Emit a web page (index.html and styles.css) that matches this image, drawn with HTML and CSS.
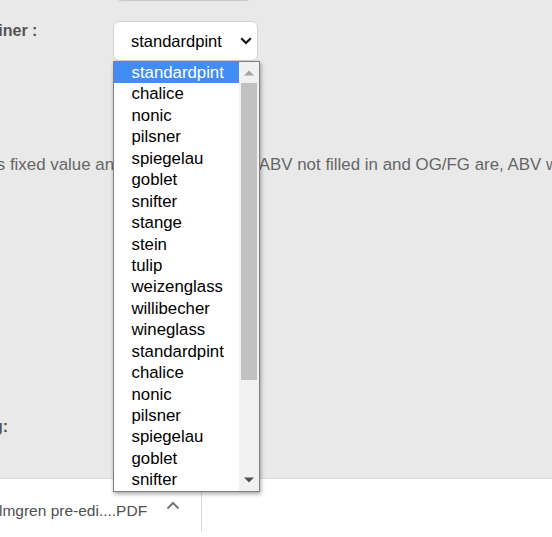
FILE: index.html
```html
<!DOCTYPE html>
<html lang="en">
<head>
    <meta charset="UTF-8">
    <meta name="viewport" content="width=device-width, initial-scale=1.0">
    <title>Edit Beer</title>
    <link rel="stylesheet" href="styles.css">
</head>
<body>

<div class="page">
    <form class="beer-form">
        <!-- previous field, scrolled mostly out of view -->
        <div class="field-stub"></div>

        <div class="row row-glass">
            <label class="label">Container :</label>
            <div class="select">
                <span class="select-value">standardpint</span>
                <svg class="select-arrow" width="12" height="8" viewBox="0 0 12 8">
                    <polyline points="1.2,1.2 6,6 10.8,1.2" fill="none" stroke="#111" stroke-width="2.2"/>
                </svg>
            </div>
        </div>

        <p class="note">ABV is fixed value and not overridden. If ABV not filled in and OG/FG are, ABV will be calculated from them.</p>

        <div class="row row-rating">
            <label class="label">Rating:</label>
        </div>
    </form>
</div>

<!-- open list of the container select -->
<div class="dropdown">
    <ul class="options">
        <li class="selected">standardpint</li>
        <li>chalice</li>
        <li>nonic</li>
        <li>pilsner</li>
        <li>spiegelau</li>
        <li>goblet</li>
        <li>snifter</li>
        <li>stange</li>
        <li>stein</li>
        <li>tulip</li>
        <li>weizenglass</li>
        <li>willibecher</li>
        <li>wineglass</li>
        <li>standardpint</li>
        <li>chalice</li>
        <li>nonic</li>
        <li>pilsner</li>
        <li>spiegelau</li>
        <li>goblet</li>
        <li>snifter</li>
    </ul>
    <div class="scrollbar">
        <div class="sb-btn">
            <svg width="10" height="6" viewBox="0 0 10 6"><polygon points="0,5.5 5,0.5 10,5.5" fill="#a3a3a3"/></svg>
        </div>
        <div class="sb-track"><div class="sb-thumb"></div></div>
        <div class="sb-btn">
            <svg width="10" height="6" viewBox="0 0 10 6"><polygon points="0,0.5 10,0.5 5,5.5" fill="#505050"/></svg>
        </div>
    </div>
</div>

<div class="download-bar">
    <div class="download-item">
        <span class="download-name">Palmgren pre-edi....PDF</span>
        <svg class="download-arrow" width="14" height="9" viewBox="0 0 14 9">
            <polyline points="1.5,7.5 7,2 12.5,7.5" fill="none" stroke="#777" stroke-width="2"/>
        </svg>
    </div>
    <div class="download-sep"></div>
</div>

</body>
</html>
```

FILE: styles.css
```css
body {
    margin: 0;
    position: relative;
    font-family: "Liberation Sans", Arial, sans-serif;
    background-color: #fff;
}
.page {
    height: 478px;
    overflow: hidden;
    background-color: #e9e9e9;
}
.beer-form {
    margin-left: -47px;
}
.field-stub {
    margin-top: -29px;
    margin-left: 162px;
    width: 137px;
    height: 30px;
    box-sizing: border-box;
    border: 1px solid #c8c8c8;
    border-radius: 6px;
}
.row {
    display: grid;
    grid-template-columns: 160px 145px;
}
.row-glass {
    margin-top: 20px;
}
.row-rating {
    margin-top: 243px;
}
.label {
    padding-top: 1px;
    font-size: 16px;
    font-weight: bold;
    color: #555;
    white-space: nowrap;
}
.select {
    display: flex;
    align-items: center;
    justify-content: space-between;
    height: 40px;
    box-sizing: border-box;
    padding: 0 5px 0 17px;
    border: 1px solid #d2d2d2;
    border-radius: 6px;
    background-color: #fff;
    font-size: 16.5px;
    line-height: 19px;
    color: #000;
}
.note {
    margin: 94px 0 0 1.5px;
    font-size: 16.9px;
    line-height: 19px;
    color: #666;
    white-space: nowrap;
}

/* dropdown list */
.dropdown {
    position: absolute;
    left: 113px;
    top: 61px;
    z-index: 2;
    display: flex;
    width: 145px;
    border: 1px solid #808080;
    background-color: #fff;
    box-shadow: 1px 2px 4px rgba(0, 0, 0, 0.35);
}
.options {
    flex: 1;
    margin: 0;
    padding: 0;
    list-style: none;
    font-size: 16.8px;
    color: #000;
}
.options li {
    height: 21.45px;
    line-height: 21.45px;
    padding-left: 17.5px;
    white-space: nowrap;
}
.options li.selected {
    background-color: #418df5;
    color: #fff;
}
.scrollbar {
    display: flex;
    flex-direction: column;
    width: 20px;
    background-color: #f1f1f1;
}
.sb-btn {
    display: flex;
    align-items: center;
    justify-content: center;
    height: 21px;
}
.sb-track {
    flex: 1;
}
.sb-thumb {
    height: 297px;
    margin: 0 2px;
    background-color: #c1c1c1;
}

/* download shelf */
.download-bar {
    display: flex;
    height: 59px;
    box-sizing: border-box;
    border-top: 1px solid #dadada;
    background-color: #fff;
}
.download-item {
    display: flex;
    align-items: flex-start;
    width: 221px;
    margin-left: -20px;
    padding-top: 23px;
    font-size: 15.5px;
    line-height: 18px;
    color: #505050;
    white-space: nowrap;
}
.download-arrow {
    margin: -1px 0 0 19px;
}
.download-sep {
    width: 1px;
    height: 44px;
    margin-top: 9px;
    background-color: #dadada;
}
```
